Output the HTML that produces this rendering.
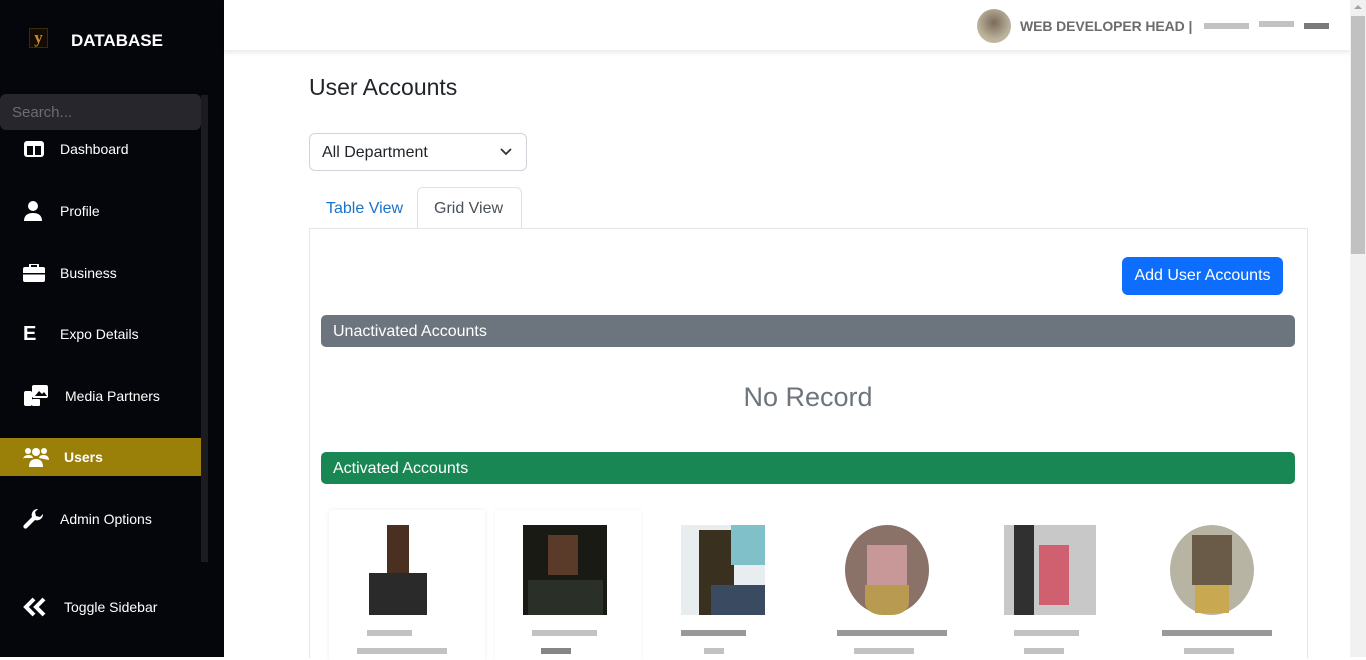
<!DOCTYPE html>
<html><head><meta charset="utf-8"><style>
*{box-sizing:border-box;margin:0;padding:0}
body{width:1366px;height:657px;overflow:hidden;background:#fff;font-family:"Liberation Sans",sans-serif;position:relative}
.sb{position:absolute;left:0;top:0;width:224px;height:657px;background:#05050c;color:#fff}
.abs{position:absolute}
.nav{position:absolute;left:0;width:201px;height:38px;display:flex;align-items:center;font-size:14px;color:#fff}
.nav svg{position:absolute;left:23px}
.nav span{position:absolute}
.main{position:absolute;left:224px;top:0;width:1126px;height:657px}
.av{position:absolute;top:525px;width:84px;height:90px}
.bl{position:absolute;height:6px;background:#999;opacity:.6}
</style></head><body>
<div class="sb">
  <div class="abs" style="left:29px;top:28px;width:19px;height:20px;border:1px solid #3a2a10;background:#140c02;color:#c8882e;font:bold 17px 'Liberation Serif',serif;text-align:center;line-height:18px">y</div>
  <div class="abs" style="left:71px;top:31px;font-weight:bold;font-size:17px">DATABASE</div>
  <div class="abs" style="left:201px;top:95px;width:7px;height:467px;background:#1b1b20"></div>
  <div class="abs" style="left:0;top:94px;width:201px;height:36px;background:#26262c;border-radius:6px;color:#6c6c72;font-size:15px;padding:10px 12px">Search...</div>
  <div class="nav" style="top:130px"><svg width="22" height="18" viewBox="0 0 22 18"><rect x="1" y="1" width="20" height="16" rx="3" fill="#fff"/><rect x="4" y="6" width="6" height="9" fill="#05050c"/><rect x="12" y="6" width="6" height="9" fill="#05050c"/></svg><span style="left:60px">Dashboard</span></div>
  <div class="nav" style="top:192px"><svg width="20" height="20" viewBox="0 0 20 20"><circle cx="10" cy="5" r="5" fill="#fff"/><path d="M1 20c0-6 4-8 9-8s9 2 9 8z" fill="#fff"/></svg><span style="left:60px">Profile</span></div>
  <div class="nav" style="top:254px"><svg width="22" height="18" viewBox="0 0 22 18"><rect x="7" y="0" width="8" height="4" rx="1" fill="none" stroke="#fff" stroke-width="2"/><rect x="0" y="3" width="22" height="15" rx="2" fill="#fff"/><rect x="0" y="9" width="22" height="1.5" fill="#05050c"/></svg><span style="left:60px">Business</span></div>
  <div class="nav" style="top:315px"><span style="left:23px;font-size:20px;font-weight:bold">E</span><span style="left:60px">Expo Details</span></div>
  <div class="nav" style="top:377px"><svg width="26" height="22" viewBox="0 0 26 22"><rect x="9" y="0" width="16" height="13" rx="2" fill="#fff"/><path d="M12 11l4-5 3 3 2-2 3 4z" fill="#05050c"/><rect x="1" y="6" width="8" height="15" rx="2" fill="#fff"/><rect x="9" y="14" width="8" height="7" rx="1" fill="#fff"/></svg><span style="left:65px">Media Partners</span></div>
  <div class="nav" style="top:438px;background:#9a7f08;font-weight:bold"><svg width="26" height="20" viewBox="0 0 26 20"><circle cx="5" cy="4" r="3" fill="#fff"/><circle cx="21" cy="4" r="3" fill="#fff"/><circle cx="13" cy="5" r="4" fill="#fff"/><path d="M0 13c0-4 3-5 6-5s4 2 4 3H0z M16 11c0-1 1-3 4-3s6 1 6 5z" fill="#fff"/><path d="M6 20c0-6 3-8 7-8s7 2 7 8z" fill="#fff"/></svg><span style="left:64px">Users</span></div>
  <div class="nav" style="top:500px"><svg width="22" height="22" viewBox="0 0 22 22"><path d="M20 6a6 6 0 0 1-8 6L4 20a2 2 0 0 1-3-3l8-8a6 6 0 0 1 6-8l-3 3 1 4 4 1z" fill="#fff"/></svg><span style="left:60px">Admin Options</span></div>
  <div class="nav" style="top:588px"><svg width="24" height="20" viewBox="0 0 24 20"><path d="M11 2L3 10l8 8M21 2l-8 8 8 8" stroke="#fff" stroke-width="4" fill="none"/></svg><span style="left:64px">Toggle Sidebar</span></div>
</div>
<div class="main">
  <div class="abs" style="left:0;top:0;width:1126px;height:51px;box-shadow:0 2px 4px rgba(0,0,0,.08);border-bottom:1px solid #eee"></div>
  <div class="abs" style="left:753px;top:9px;width:34px;height:34px;border-radius:50%;background:radial-gradient(circle at 50% 40%,#7a6a5a,#b8b09a 60%,#d6c79a)"></div>
  <div class="abs" style="left:796px;top:18px;font-weight:bold;font-size:14px;color:#6c6c6c;letter-spacing:-0.1px">WEB DEVELOPER HEAD |</div>
  <div class="bl" style="left:980px;top:23px;width:45px"></div><div class="bl" style="left:1035px;top:21px;width:35px"></div><div class="bl" style="left:1080px;top:23px;width:25px;background:#222"></div>
  <div class="abs" style="left:85px;top:74px;font-size:23px;color:#212529">User Accounts</div>
  <div class="abs" style="left:85px;top:133px;width:218px;height:38px;border:1px solid #ced4da;border-radius:6px;padding:10px 12px;font-size:16px;color:#212529">All Department<svg class="abs" style="left:190px;top:14px" width="12" height="8" viewBox="0 0 12 8"><path d="M1 1l5 5 5-5" stroke="#333" stroke-width="1.8" fill="none"/></svg></div>
  <div class="abs" style="left:102px;top:200px;font-size:16px;color:#1a73c8">Table View</div>
  <div class="abs" style="left:193px;top:187px;width:105px;height:42px;border:1px solid #dee2e6;border-bottom:none;border-radius:6px 6px 0 0;background:#fff;padding:12px 16px;font-size:16px;color:#495057">Grid View</div>
  <div class="abs" style="left:85px;top:228px;width:999px;height:430px;border:1px solid #e4e6e8;border-bottom:none"></div>
  <div class="abs" style="left:898px;top:257px;width:161px;height:38px;background:#0d6efd;border-radius:6px;color:#fff;font-size:16px;text-align:center;line-height:38px">Add User Accounts</div>
  <div class="abs" style="left:97px;top:315px;width:974px;height:32px;background:#6c757d;border-radius:5px;color:#fff;font-size:16px;padding:8px 12px">Unactivated Accounts</div>
  <div class="abs" style="left:97px;top:382px;width:974px;text-align:center;font-size:27px;color:#6c757d">No Record</div>
  <div class="abs" style="left:97px;top:452px;width:974px;height:32px;background:#198754;border-radius:5px;color:#fff;font-size:16px;padding:8px 12px">Activated Accounts</div>
  <div class="abs" style="left:105px;top:510px;width:156px;height:150px;box-shadow:0 0 4px rgba(0,0,0,.08)"></div>
  <div class="abs" style="left:271px;top:510px;width:146px;height:150px;box-shadow:0 0 4px rgba(0,0,0,.06)"></div>
  <div class="av" style="left:133px;background:#fff"><div class="abs" style="left:30px;top:0;width:22px;height:50px;background:#4a3020"></div><div class="abs" style="left:12px;top:48px;width:58px;height:42px;background:#2a2a2a"></div></div>
  <div class="av" style="left:299px;background:#1a1a14"><div class="abs" style="left:25px;top:10px;width:30px;height:40px;background:#5a3a28"></div><div class="abs" style="left:5px;top:55px;width:75px;height:35px;background:#2a3028"></div></div>
  <div class="av" style="left:457px;background:#e8eef0"><div class="abs" style="left:18px;top:5px;width:35px;height:85px;background:#3a3020"></div><div class="abs" style="left:50px;top:0;width:34px;height:40px;background:#80c0c8"></div><div class="abs" style="left:30px;top:60px;width:54px;height:30px;background:#3a4a60"></div></div>
  <div class="av" style="left:621px;border-radius:50%;background:#8a7268"><div class="abs" style="left:22px;top:20px;width:40px;height:40px;background:#c89898"></div><div class="abs" style="left:20px;top:60px;width:44px;height:30px;background:#b89a50;border-radius:0 0 40% 40%"></div></div>
  <div class="av" style="left:780px;width:92px;background:#c8c8c8"><div class="abs" style="left:10px;top:0;width:20px;height:90px;background:#303030"></div><div class="abs" style="left:35px;top:20px;width:30px;height:60px;background:#d06070"></div></div>
  <div class="av" style="left:946px;border-radius:50%;background:#b8b4a4"><div class="abs" style="left:22px;top:10px;width:40px;height:50px;background:#6a5a48"></div><div class="abs" style="left:25px;top:60px;width:34px;height:28px;background:#c8a850"></div></div>
  <div class="bl" style="left:143px;top:630px;width:45px"></div><div class="bl" style="left:133px;top:648px;width:90px"></div>
  <div class="bl" style="left:308px;top:630px;width:65px"></div><div class="bl" style="left:317px;top:648px;width:30px;background:#333"></div>
  <div class="bl" style="left:457px;top:630px;width:65px;background:#555"></div><div class="bl" style="left:480px;top:648px;width:20px"></div>
  <div class="bl" style="left:613px;top:630px;width:110px;background:#555"></div><div class="bl" style="left:630px;top:648px;width:60px"></div>
  <div class="bl" style="left:790px;top:630px;width:65px"></div><div class="bl" style="left:800px;top:648px;width:40px"></div>
  <div class="bl" style="left:938px;top:630px;width:110px;background:#555"></div><div class="bl" style="left:960px;top:648px;width:50px"></div>
</div>
<div class="abs" style="left:1350px;top:0;width:16px;height:657px;background:#f1f1f1"></div>
<div class="abs" style="left:1351px;top:16px;width:14px;height:238px;background:#c1c1c1"></div>
<svg class="abs" style="left:1353px;top:4px" width="10" height="6"><path d="M1 5l4-4 4 4z" fill="#a3a3a3"/></svg>
</body></html>
